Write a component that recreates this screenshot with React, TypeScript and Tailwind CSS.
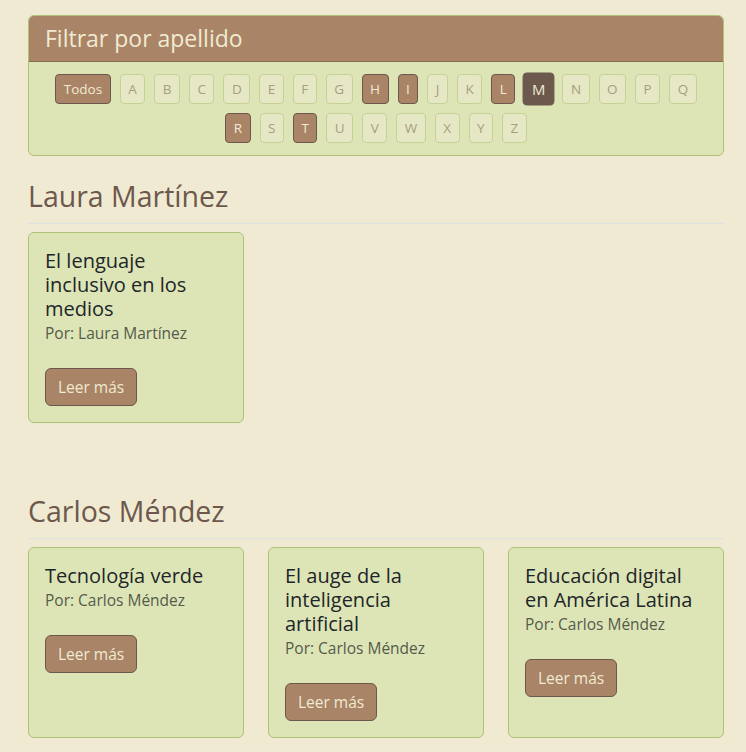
import React, { useState } from "react";

interface Article {
  title: string;
  author: string;
}

const authors: { name: string; articles: Article[] }[] = [
  {
    name: "Laura Martínez",
    articles: [{ title: "El lenguaje inclusivo en los medios", author: "Laura Martínez" }],
  },
  {
    name: "Carlos Méndez",
    articles: [
      { title: "Tecnología verde", author: "Carlos Méndez" },
      { title: "El auge de la inteligencia artificial", author: "Carlos Méndez" },
      { title: "Educación digital en América Latina", author: "Carlos Méndez" },
    ],
  },
];

const letters = "ABCDEFGHIJKLMNOPQRSTUVWXYZ".split("");
const available = ["H", "I", "L", "M", "R", "T"];

export default function App() {
  const [selected, setSelected] = useState("M");

  return (
    <div className="min-h-screen bg-[#f0ead2] pl-[28px] pr-[22px] pt-[15px] pb-8 font-['Open_Sans',sans-serif]">
      {/* Filter card */}
      <div className="rounded-md border border-[#adc178] bg-[#dde5b6] overflow-hidden">
        <div className="h-[46px] flex items-center px-4 bg-[#a98467] border-b border-[#8a6b54] text-[23px] text-[#f0ead2]">
          Filtrar por apellido
        </div>
        <div className="flex flex-wrap justify-center gap-[9px] px-3 pt-3 pb-3">
          <button
            onClick={() => setSelected("")}
            className="px-[7.5px] py-1 text-[13.5px] leading-5 rounded border border-[#6c584c] bg-[#a98467] text-[#f0ead2]"
          >
            Todos
          </button>
          {letters.map((l) => {
            const isSel = selected === l;
            const isOn = available.includes(l);
            return (
              <button
                key={l}
                onClick={() => isOn && setSelected(l)}
                className={
                  isSel
                    ? "px-[7.5px] py-1 text-[13.5px] leading-5 rounded border border-[#6c584c] bg-[#6c584c] text-[#f0ead2] scale-110"
                    : isOn
                    ? "px-[7.5px] py-1 text-[13.5px] leading-5 rounded border border-[#6c584c] bg-[#a98467] text-[#f0ead2]"
                    : "px-[7.5px] py-1 text-[13.5px] leading-5 rounded border border-[#adc178] bg-[#f0ead2] text-[#6c584c] opacity-50"
                }
              >
                {l}
              </button>
            );
          })}
        </div>
      </div>

      {/* Author sections */}
      {authors.map((a) => (
        <section key={a.name} className="mb-[69px]">
          <h2 className="mt-[21px] pb-2 mb-2 border-b border-[#dee2e6] text-[28.5px] leading-[38px] text-[#6c584c]">
            {a.name}
          </h2>
          <div className="grid grid-cols-3 gap-6">
            {a.articles.map((art) => (
              <div
                key={art.title}
                className="rounded-md border border-[#adc178] bg-[#dde5b6] p-4"
              >
                <h3 className="text-[20px] leading-6 text-[#212529]">{art.title}</h3>
                <p className="text-[15.5px] leading-6 text-[#555a4c]">Por: {art.author}</p>
                <button className="mt-[23px] px-3 py-1.5 text-[15.5px] leading-6 rounded-md border border-[#6c584c] bg-[#a98467] text-[#f0ead2]">
                  Leer más
                </button>
              </div>
            ))}
          </div>
        </section>
      ))}
    </div>
  );
}
